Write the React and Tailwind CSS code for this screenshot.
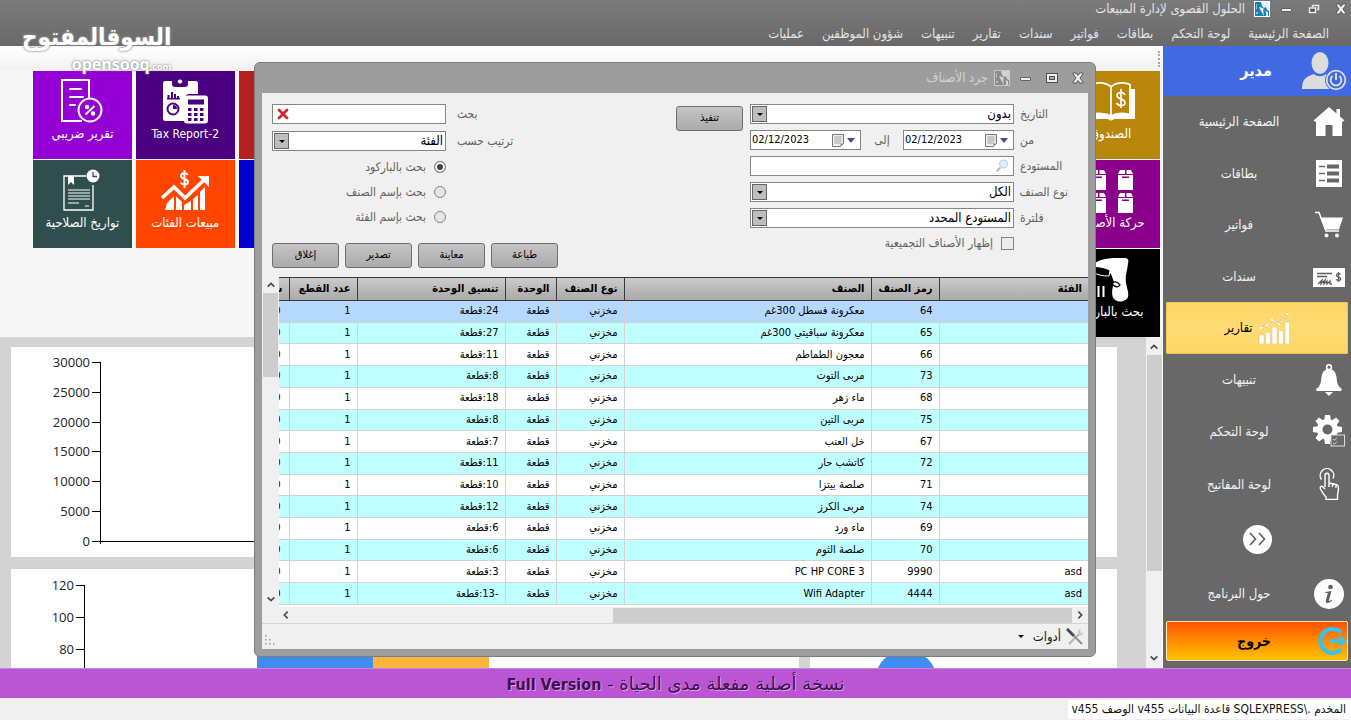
import React, { useState } from 'react';
import clsx from 'clsx';

const menuItems = [
  'الصفحة الرئيسية',
  'لوحة التحكم',
  'بطاقات',
  'فواتير',
  'سندات',
  'تقارير',
  'تنبيهات',
  'شؤون الموظفين',
  'عمليات',
];

const rows = [
  { category: '', code: '64', name: 'معكرونة فسطل 300غم', format: '24:قطعة' },
  { category: '', code: '65', name: 'معكرونة سباقيتي 300غم', format: '27:قطعة' },
  { category: '', code: '66', name: 'معجون الطماطم', format: '11:قطعة' },
  { category: '', code: '73', name: 'مربى التوت', format: '8:قطعة' },
  { category: '', code: '68', name: 'ماء زهر', format: '18:قطعة' },
  { category: '', code: '75', name: 'مربى التين', format: '8:قطعة' },
  { category: '', code: '67', name: 'خل العنب', format: '7:قطعة' },
  { category: '', code: '72', name: 'كاتشب حار', format: '11:قطعة' },
  { category: '', code: '71', name: 'صلصة بيتزا', format: '10:قطعة' },
  { category: '', code: '74', name: 'مربى الكرز', format: '12:قطعة' },
  { category: '', code: '69', name: 'ماء ورد', format: '6:قطعة' },
  { category: '', code: '70', name: 'صلصة الثوم', format: '6:قطعة' },
  { category: 'asd', code: '9990', name: 'PC HP CORE 3', format: '3:قطعة' },
  { category: 'asd', code: '4444', name: 'Wifi Adapter', format: '-13:قطعة' },
];

const columns = [
  { label: 'الفئة', width: 'w-[149px]' },
  { label: 'رمز الصنف', width: 'w-[68px]' },
  { label: 'الصنف', width: '' },
  { label: 'نوع الصنف', width: 'w-[68px]' },
  { label: 'الوحدة', width: 'w-[51px]' },
  { label: 'تنسيق الوحدة', width: 'w-[148px]' },
  { label: 'عدد القطع', width: 'w-[68px]' },
  { label: 'س', width: 'w-[10px]' },
];

/* ---------- icons ---------- */

function AppIcon({ muted }) {
  const ink = muted ? '#8a8a8a' : '#1d7fae';
  return (
    <svg viewBox="0 0 16 16" className="size-4" aria-hidden="true">
      <rect width="16" height="16" fill={muted ? '#c9c9c9' : '#ffffff'} />
      <rect x="1" y="1" width="14" height="14" fill={ink} />
      <path d="M7 1h8v9l-2-1-1-3-2 1-2-2zM5 6l4 1 2 3 3 1v4h-4l-3-5z" fill={muted ? '#d5d5d5' : '#e6f5fb'} />
      <path d="M9 8l3 3v4h-2z" fill={ink} />
      <path d="M2 11h2v2H2zM2 3h1v5H2z" fill={muted ? '#bdbdbd' : '#7cc4e4'} />
    </svg>
  );
}

function CloseIcon() {
  return (
    <svg viewBox="0 0 12 12" className="size-3" aria-hidden="true">
      <path d="M1 1h3.200L6 3.500 7.800 1H11v.8L8 6l3 4.200v.8H7.800L6 8.500 4.200 11H1v-.8L4 6 1 1.800z" fill="#eee" stroke="#4d4d4d" strokeWidth=".9" />
    </svg>
  );
}

function RestoreIcon() {
  return (
    <svg viewBox="0 0 12 12" className="size-3" aria-hidden="true">
      <path d="M4.500 4V2.500h6v4H9" fill="none" stroke="#e8e8e8" strokeWidth="1.500" />
      <rect x="1.500" y="5" width="6" height="4.500" fill="#555" stroke="#e8e8e8" strokeWidth="1.500" />
    </svg>
  );
}

function MaximizeIcon() {
  return (
    <svg viewBox="0 0 12 12" className="size-3" aria-hidden="true">
      <rect x=".5" y="1.500" width="11" height="9" fill="#eee" stroke="#4d4d4d" />
      <rect x="3.500" y="4.500" width="5" height="3" fill="#aaa" stroke="#4d4d4d" />
    </svg>
  );
}

function MinimizeIcon() {
  return (
    <svg viewBox="0 0 12 12" className="size-3" aria-hidden="true">
      <rect x=".5" y="5.500" width="10" height="3" rx=".5" fill="#eee" stroke="#4d4d4d" strokeWidth=".8" />
    </svg>
  );
}

function Chevron({ dir }) {
  const paths = {
    up: 'M2 8l4-4 4 4',
    down: 'M2 4l4 4 4-4',
    left: 'M8 2L4 6l4 4',
    right: 'M4 2l4 4-4 4',
  };
  return (
    <svg viewBox="0 0 12 12" className="size-[10px]" aria-hidden="true">
      <path d={paths[dir]} fill="none" stroke="#4a4a4a" strokeWidth="2" />
    </svg>
  );
}

function UserPowerIcon() {
  return (
    <svg viewBox="0 0 46 40" className="h-10 w-[46px]" fill="#dcdcdc" aria-hidden="true">
      <ellipse cx="19" cy="12" rx="8.500" ry="11" />
      <path d="M1 38c0-9 3-12 12-15 3 3 9 3 12 0 8 2 12 6 12 15z" />
      <circle cx="35" cy="29" r="11" fill="#4169e1" />
      <circle cx="35" cy="29" r="9.300" fill="none" stroke="#dcdcdc" strokeWidth="1.800" />
      <path d="M31.500 25a5.400 5.400 0 1 0 7 0" fill="none" stroke="#dcdcdc" strokeWidth="1.900" />
      <path d="M35 22v7" stroke="#dcdcdc" strokeWidth="2" />
    </svg>
  );
}

function HomeIcon() {
  return (
    <svg viewBox="0 0 32 32" className="size-8" fill="#fff" aria-hidden="true">
      <path d="M16 1L0.500 14.500 3 16v14h9.500V19h7v11H29V16l2.500-1.500L27 10.500V3h-3.500v4.500z" />
    </svg>
  );
}

function CardsIcon() {
  return (
    <svg viewBox="0 0 32 32" className="size-8" aria-hidden="true">
      <rect x="3" y="3" width="26" height="27" fill="#fff" />
      <path d="M6 9.500h6M6 16.500h6M6 23.500h6" stroke="#686868" strokeWidth="1.600" />
      <path d="M14 7.500h12v4H14zM14 14.500h12v4H14zM14 21.500h12v4H14z" fill="#686868" />
    </svg>
  );
}

function CartIcon() {
  return (
    <svg viewBox="0 0 32 32" className="size-8" aria-hidden="true">
      <path d="M2 3.500h4l7 18.500h13" fill="none" stroke="#fff" strokeWidth="1.500" />
      <path d="M7.500 8.500H30l-4 12H12z" fill="#fff" />
      <circle cx="13.500" cy="26.500" r="2" fill="#fff" />
      <circle cx="24" cy="26.500" r="2" fill="#fff" />
    </svg>
  );
}

function CheckIcon() {
  return (
    <svg viewBox="0 0 32 32" className="size-8" aria-hidden="true">
      <rect y="7" width="32" height="19" rx=".5" fill="#fff" />
      <path d="M4 12.500h15M4 15.500h10" stroke="#5d5d5d" strokeWidth="1.300" />
      <path d="M5 23l4-4-1 4 4-4-1 4 3-3v3l3-3v3h2" fill="none" stroke="#5d5d5d" strokeWidth="1.300" />
      <path d="M27.500 13.500c-1-1.400-4-1-4 .8 0 2.400 4.200 1.200 4.200 3.600 0 1.800-3.400 2-4.400.4M25.500 11v10" fill="none" stroke="#5d5d5d" strokeWidth="1.300" />
    </svg>
  );
}

function ReportsIcon() {
  return (
    <svg viewBox="0 0 32 32" className="size-8" aria-hidden="true">
      <path d="M1 23h5v9H1zM7.500 20.500h5V32h-5zM14 15h5v17h-5zM20.500 18.500h5V32h-5zM27 10h4.500v22H27z" fill="#fff" stroke="#e5c36d" strokeWidth=".5" />
      <path d="M3 16l6-3 5-5 7 4 8-10" fill="none" stroke="#b99b55" strokeWidth="2" />
      <path d="M3 16l6-3 5-5 7 4 8-10" fill="none" stroke="#fff" strokeWidth="1.200" />
      <path d="M2 15h2v2H2zM8 12h2v2H8zM13 7h2v2h-2zM20 11h2v2h-2zM28 1h2v2h-2z" fill="#fff" />
    </svg>
  );
}

function BellIcon() {
  return (
    <svg viewBox="0 0 32 32" className="size-8" aria-hidden="true">
      <circle cx="16" cy="3.200" r="2.400" fill="none" stroke="#fff" strokeWidth="1.600" />
      <path d="M16 5c5 0 7 4 7.500 8 .5 6 1 9 5 11.500 1 2-.5 2.500-2 2.500h-21c-1.500 0-3-.5-2-2.500 4-2.500 4.500-5.500 5-11.500C9 9 11 5 16 5zM12 28h8l-4 4z" fill="#fff" />
    </svg>
  );
}

function GearIcon() {
  return (
    <svg viewBox="0 0 32 32" className="size-8" aria-hidden="true">
      <g fill="#fff">
        <circle cx="14.500" cy="14.500" r="10.500" />
        <path d="M12 0h5l1 6h-7zM12 29h5l1-6h-7zM0 12v5l6 1v-7zM29 12v5l-6 1v-7z" />
        <path d="M12 0h5l1 6h-7zM12 29h5l1-6h-7zM0 12v5l6 1v-7zM29 12v5l-6 1v-7z" transform="rotate(45 14.500 14.500)" />
      </g>
      <circle cx="14.500" cy="14.500" r="5" fill="#686868" />
      <rect x="18" y="20" width="13.500" height="11" fill="#686868" stroke="#ddd" />
      <path d="M20 24l1.300 1.300 2.700-2.800M20 28l1.300 1.300 2.700-2.800" fill="none" stroke="#ddd" strokeWidth=".9" />
    </svg>
  );
}

function TouchIcon() {
  return (
    <svg viewBox="0 0 32 32" className="size-8" fill="none" stroke="#fff" strokeWidth="1.400" aria-hidden="true">
      <path d="M8.500 11.500A6.800 6.800 0 1 1 20 10.500" />
      <path d="M12 19V7.500c0-3 4-3 4 0V15l7 1.500c2 .5 2.500 1.500 2.500 3.500 0 4-1 5-1 8v3.500H13V29c-2-2-4-5-5.500-8-1-2.500 1-3.500 2.500-2L12 21M16 15v4M19.500 15.500V19M23 16.500V20" />
    </svg>
  );
}

function InfoIcon() {
  return (
    <svg viewBox="0 0 32 32" className="size-8" aria-hidden="true">
      <circle cx="16" cy="16" r="15" fill="#fff" />
      <circle cx="17.500" cy="9" r="2.300" fill="#5f5f5f" />
      <path d="M12.500 14l6-1-2.600 9.500c-.2 1 .6 1 2.600-1l.6.7c-2.500 3.300-7 3.800-6.300.5l2-7.700h-2.400z" fill="#5f5f5f" />
    </svg>
  );
}

function ExitIcon() {
  return (
    <svg viewBox="0 0 30 30" className="size-[30px]" fill="none" stroke="#35c4ec" aria-hidden="true">
      <path d="M24 6.500A12 12 0 1 0 24 23.500" strokeWidth="4.200" />
      <path d="M13 15h12" strokeWidth="4" />
      <path d="M22 8.500l8 6.500-8 6.500z" fill="#35c4ec" stroke="none" />
    </svg>
  );
}

function TaxDocIcon() {
  return (
    <svg viewBox="0 0 44 46" className="h-[46px] w-11" fill="none" stroke="#fff" strokeWidth="2" aria-hidden="true">
      <path d="M22 43H2V2h27v18" />
      <path d="M10 11h11M10 19h13M10 27h5" strokeLinecap="round" />
      <circle cx="30" cy="32" r="11.500" />
      <path d="M34.500 28l-9 8.500" />
      <circle cx="27" cy="29" r="1.200" />
      <circle cx="33" cy="35.500" r="1.200" />
    </svg>
  );
}

function TaxCalcIcon() {
  return (
    <svg viewBox="0 0 46 46" className="size-[46px]" fill="#fff" aria-hidden="true">
      <path d="M3 3h31c1 0 2 1 2 2v11h-8c-4 0-5 2-5 5v22H3c-1 0-2-1-2-2V5c0-1 1-2 2-2z" />
      <path d="M10 3h16v3c0 2-1 3-3 3H13c-2 0-3-1-3-3z" fill="#4b0082" />
      <circle cx="18" cy="3.500" r="2.600" stroke="#4b0082" />
      <path d="M5 20h13v1.500H5zM5.500 17h2v3h-2zM9 14h2v6H9zM12 16h2v4h-2zM15 18h2v2h-2z" fill="#4b0082" />
      <circle cx="11" cy="31" r="5.500" fill="none" stroke="#4b0082" strokeWidth="2" />
      <path d="M11 27v4h4a4 4 0 0 0-4-4z" fill="#4b0082" />
      <rect x="22" y="17.500" width="24" height="28" rx="3" />
      <rect x="26" y="21.500" width="16" height="5" fill="#4b0082" />
      <path d="M26 30h3.500v3H26zM32 30h3.500v3H32zM38 30h3.500v3H38zM26 35h3.500v3H26zM32 35h3.500v3H32zM38 35h3.500v3H38zM26 40h3.500v3H26zM32 40h3.500v3H32zM38 40h3.500v3H38z" fill="#4b0082" />
    </svg>
  );
}

function ExpiryIcon() {
  return (
    <svg viewBox="0 0 44 46" className="h-[46px] w-11" fill="none" stroke="#fff" aria-hidden="true">
      <path d="M26 9H4v34h29V18" strokeWidth="1.300" />
      <path d="M8 23h22M8 26h22M8 29h22M8 32h22M8 36h11M25 39h4" strokeWidth="1.200" />
      <path d="M8 9h6v9l-3-3-3 3z" fill="#fff" stroke="none" />
      <circle cx="33" cy="9" r="6.500" fill="#fff" stroke="none" />
      <path d="M33 5v4.500h4" stroke="#2f4f4f" strokeWidth="1.300" />
    </svg>
  );
}

function SalesIcon() {
  return (
    <svg viewBox="0 0 50 46" className="h-[46px] w-[50px]" aria-hidden="true">
      <path d="M7 36l7-7v14H5zM16 29l6 6v8h-6zM24 38l7-4v9h-7zM33 32l5-4v15h-5zM40 25l5-5v23h-5z" fill="#fff" />
      <path d="M2 31l12-11 11 11 19-18" fill="none" stroke="#fff" strokeWidth="3.600" />
      <path d="M38 9h11v11z" fill="#fff" />
      <path d="M28 8c-2-3-7-2-7 1 0 4 7 2 7 6 0 3-5.500 3.500-7.500.5M24.500 3v18" fill="none" stroke="#fff" strokeWidth="2" />
    </svg>
  );
}

function LedgerIcon() {
  return (
    <svg viewBox="0 0 50 46" className="h-[46px] w-[50px]" aria-hidden="true">
      <path d="M3 11H0v30h22c2 2 4 2 6 0h21V11h-4v25H3z" fill="#fff" />
      <path d="M25 9C20 4 10 4 5 6.500v30c6-1.500 15-1.500 20 1.500 5-3 13-3 19-1.500v-30C39 4 30 4 25 9zm0 0v30" fill="#b8860b" stroke="#fff" strokeWidth="1.800" />
      <path d="M39 17c-2-4-8-3-8 .5 0 4.500 8 2.500 8 7 0 4-6.500 4-8.500.5M35 11v19" fill="none" stroke="#fff" strokeWidth="1.600" />
    </svg>
  );
}

function BoxesIcon() {
  const spots = [[5, 3], [32, 3], [5, 26], [32, 26]];
  return (
    <svg viewBox="0 0 50 46" className="h-[46px] w-[50px]" fill="#fff" aria-hidden="true">
      {spots.map(([x, y]) => (
        <g key={`${x}-${y}`} transform={`translate(${x} ${y})`}>
          <path d="M2 0h5v4H0zM8.500 0H13l2 4H8.500zM0 5h15v15H0z" />
          <path d="M4 6.500h7V8H4z" fill="#8b008b" />
        </g>
      ))}
    </svg>
  );
}

function ScannerIcon() {
  return (
    <svg viewBox="0 0 50 46" className="h-[46px] w-[50px]" aria-hidden="true">
      <path d="M4 10C12 4 20 2 30 2h10c2 1 3 2 2 5-1 10-3 12-2 20 1 6 3 9 2 14-2 5-11 6-14 2-3-3-2-10 0-17-2-5-2-7-4-9-6 0-15-2-20-4z" fill="#fff" />
      <path d="M6 11c5-1 11 0 18 3l-1 6c-6 0-12-1-16-4z" fill="#000" stroke="#fff" />
      <path d="M26 28c2-3 5-3 8 1-2 3-5 2-8-1z" fill="#fff" stroke="#000" strokeWidth="1.300" />
      <path d="M7 30v11M12.500 30v11M17.500 30v11" stroke="#fff" strokeWidth="2" />
    </svg>
  );
}

function CalendarIcon() {
  return (
    <svg viewBox="0 0 12 13" className="h-[13px] w-3" aria-hidden="true">
      <path d="M.5.500h11v9l-3 3h-8z" fill="#f0eeee" stroke="#777" />
      <path d="M2 3h8M2 5h8M2 7h8M2 9h6M4 2v8M6 2v8M8 2v8" stroke="#b5b0b5" strokeWidth=".8" />
      <path d="M8.500 12.500v-3h3z" fill="#888" />
    </svg>
  );
}

function SearchGlass() {
  return (
    <svg viewBox="0 0 14 14" className="size-[14px]" aria-hidden="true">
      <path d="M5.500 8.500L1.500 12.500" stroke="#b5b9c6" strokeWidth="2" />
      <circle cx="8.500" cy="5" r="4" fill="#e2effb" stroke="#b4cbe4" />
    </svg>
  );
}

function ToolsIcon() {
  return (
    <svg viewBox="0 0 18 18" className="size-[18px]" fill="none" aria-hidden="true">
      <path d="M3 16L13 6" stroke="#b5b5b5" strokeWidth="2.200" />
      <path d="M12 6c-1-3 1-5 3-5l-1 3 1 1 2-1c0 3-2 4-4 3.500" fill="#c9c9c9" />
      <path d="M1 1l7 7" stroke="#4a4a4a" strokeWidth="3" />
      <path d="M8 8l8 8" stroke="#8f8f8f" strokeWidth="2" />
    </svg>
  );
}

/* ---------- shared bits ---------- */

function ScrollButton({ dir, label }) {
  return (
    <button type="button" aria-label={label} className="flex size-4 shrink-0 items-center justify-center">
      <Chevron dir={dir} />
    </button>
  );
}

function SelectBox({ id, value }) {
  return (
    <div className="relative">
      <select
        id={id}
        defaultValue={value}
        className="block h-5 w-full appearance-none border border-[#858585] bg-white pr-[2px] pl-5 text-[13px] leading-[18px] text-black outline-none"
      >
        <option>{value}</option>
      </select>
      <span className="pointer-events-none absolute top-[2px] left-[2px] flex h-4 w-[15px] items-center justify-center border border-[#666] bg-[#bdbdbd]">
        <span className="border-x-[3px] border-t-[3px] border-x-transparent border-t-black" />
      </span>
    </div>
  );
}

function DateBox({ id }) {
  return (
    <div dir="ltr" className="flex h-5 w-[111px] items-center gap-[3px] border border-[#858585] bg-white pr-[5px]">
      <input
        id={id}
        defaultValue="02/12/2023"
        className="w-0 min-w-0 flex-1 bg-transparent pl-px text-[11px] text-black outline-none"
      />
      <CalendarIcon />
      <span className="border-x-4 border-t-[5px] border-x-transparent border-t-[#44527a]" />
    </div>
  );
}

function GrayButton({ children }) {
  return (
    <button
      type="button"
      className="h-[25px] w-[67px] shrink-0 rounded-[3px] border border-[#6f6f6f] bg-linear-to-b from-[#c4c4c4] to-[#ababab] text-[11px] text-black"
    >
      {children}
    </button>
  );
}

function FieldRow({ label, htmlFor, children }) {
  return (
    <div className="flex h-5 items-center gap-[6px]">
      <label htmlFor={htmlFor} className="w-[48px] text-left text-xs whitespace-nowrap text-[#636363]">
        {label}
      </label>
      <div className="w-[264px]">{children}</div>
    </div>
  );
}

/* ---------- sections ---------- */

function Header() {
  return (
    <header className="bg-linear-to-b from-[#7b7b7b] to-[#696969] text-[#e2e2e2]">
      <div className="flex h-[18px] items-center gap-[15px] pr-1">
        <button type="button" aria-label="إغلاق البرنامج"><CloseIcon /></button>
        <button type="button" aria-label="استعادة"><RestoreIcon /></button>
        <button type="button" aria-label="تصغير"><MinimizeIcon /></button>
        <div className="-mr-1 flex items-center gap-[9px]">
          <AppIcon />
          <h1 className="text-[13px] leading-[18px] whitespace-nowrap">الحلول القصوى لإدارة المبيعات</h1>
        </div>
      </div>
      <nav className="flex h-7 items-center gap-[18px] pt-1 pr-[22px]">
        {menuItems.map((item) => (
          <a key={item} href="#" className="text-[13px] whitespace-nowrap">
            {item}
          </a>
        ))}
      </nav>
    </header>
  );
}

function SideItem({ label, icon, tall }) {
  return (
    <a href="#" className={clsx('flex items-center pr-[6px] text-[13px] text-[#f2f2f2]', tall ? 'flex-[18]' : 'flex-[17]')}>
      {icon}
      <span className="flex-1 pl-[2px] text-center">{label}</span>
    </a>
  );
}

function Sidebar() {
  return (
    <aside className="flex w-[188px] shrink-0 flex-col bg-[#686868]">
      <div className="flex h-[50px] items-center bg-[#4169e1] pr-1">
        <UserPowerIcon />
        <span className="flex-1 pl-12 text-center text-base font-bold text-white">مدير</span>
      </div>
      <nav className="flex flex-1 flex-col">
        <SideItem label="الصفحة الرئيسية" icon={<HomeIcon />} />
        <SideItem label="بطاقات" icon={<CardsIcon />} />
        <SideItem label="فواتير" icon={<CartIcon />} />
        <SideItem label="سندات" icon={<CheckIcon />} />
        <a
          href="#"
          className="mx-[3px] flex flex-[17] items-center justify-center gap-[5px] rounded-xs bg-linear-to-b from-[#fed566] via-[#ffdc74] to-[#fed566] text-[13px] text-black inset-ring inset-ring-[#f0c658]"
        >
          <ReportsIcon />
          <span>تقارير</span>
        </a>
        <SideItem label="تنبيهات" icon={<BellIcon />} />
        <SideItem label="لوحة التحكم" icon={<GearIcon />} />
        <SideItem label="لوحة المفاتيح" icon={<TouchIcon />} tall />
        <div className="flex flex-[18] items-center justify-center">
          <button type="button" aria-label="المزيد" className="flex size-[29px] items-center justify-center rounded-full bg-white">
            <svg viewBox="0 0 20 20" className="size-5" fill="none" stroke="#5c5c5c" strokeWidth="1.600">
              <path d="M3 4l5.500 6L3 16M12 4l5.500 6-5.500 6" />
            </svg>
          </button>
        </div>
        <SideItem label="حول البرنامج" icon={<InfoIcon />} tall />
      </nav>
      <button
        type="button"
        className="mx-[3px] mb-[7px] flex h-10 items-center rounded-xs border border-[#ffe9a8] bg-linear-to-b from-[#ff4d00] to-[#ffc000] text-sm font-bold text-black"
      >
        <ExitIcon />
        <span className="flex-1 pl-6 text-center">خروج</span>
      </button>
    </aside>
  );
}

function Tile({ label, icon, className, latin }) {
  return (
    <a href="#" className={clsx('flex h-[88px] flex-col items-center overflow-hidden pt-[7px] whitespace-nowrap text-white', className)}>
      {icon}
      {label ? <span className={latin ? 'text-xs leading-5' : 'text-[13px] leading-5'}>{label}</span> : null}
    </a>
  );
}

function Tiles() {
  return (
    <div className="bg-[#f7f7f7]">
      <div className="mr-[3px] ml-[33px] grid grid-cols-11 gap-x-1 gap-y-px">
        <Tile className="col-start-1 row-start-1 bg-[#b8860b]" label="الصندوق" icon={<LedgerIcon />} />
        <Tile className="col-start-1 row-start-2 bg-[#8b008b]" label="حركة الأصناف" icon={<BoxesIcon />} />
        <Tile className="col-start-1 row-start-3 bg-black" label="بحث بالباركود" icon={<ScannerIcon />} />
        <Tile className="col-start-9 row-start-1 bg-[#b22222]" />
        <Tile className="col-start-9 row-start-2 bg-[#0000cd]" />
        <Tile className="col-start-10 row-start-1 bg-[#4b0082]" label="Tax Report-2" latin icon={<TaxCalcIcon />} />
        <Tile className="col-start-10 row-start-2 bg-[#ff4500]" label="مبيعات الفئات" icon={<SalesIcon />} />
        <Tile className="col-start-11 row-start-1 bg-[#9400d3]" label="تقرير ضريبي" icon={<TaxDocIcon />} />
        <Tile className="col-start-11 row-start-2 bg-[#2f4f4f]" label="تواريخ الصلاحية" icon={<ExpiryIcon />} />
      </div>
    </div>
  );
}

function SalesChart() {
  const ticks = [30000, 25000, 20000, 15000, 10000, 5000, 0];
  return (
    <svg className="block h-[210px] w-full" direction="ltr">
      {ticks.map((tick, i) => {
        const y = Math.round(15 + i * 29.8);
        return (
          <g key={tick}>
            <text x="79" y={y + 5} textAnchor="end" className="font-[family-name:'Open_Sans',sans-serif] text-[13px]" fill="#222">
              {tick}
            </text>
            <path d={`M81 ${y + 0.5}h8`} stroke="#000" />
          </g>
        );
      })}
      <path d="M89.500 15v182" stroke="#000" />
      <path d="M89 194.500h650" stroke="#000" />
    </svg>
  );
}

function CountChart() {
  const ticks = [120, 100, 80];
  return (
    <svg className="block h-[210px] w-full" direction="ltr">
      {ticks.map((tick, i) => {
        const y = 16 + i * 32;
        return (
          <g key={tick}>
            <text x="63" y={y + 5} textAnchor="end" className="font-[family-name:'Open_Sans',sans-serif] text-[13px]" fill="#222">
              {tick}
            </text>
            <path d={`M65 ${y + 0.5}h8`} stroke="#000" />
          </g>
        );
      })}
      <path d="M73.500 16v190" stroke="#000" />
      <rect x="246" y="40" width="116" height="165" fill="#418cf0" />
      <rect x="362" y="60" width="116" height="145" fill="#fcb441" />
    </svg>
  );
}

function Charts() {
  return (
    <div className="flex min-h-0 flex-1 bg-[#d3d3d3]">
      <div className="flex w-[17px] shrink-0 flex-col items-center border-r border-white bg-[#f0f0f0] py-[2px]">
        <ScrollButton dir="up" label="تمرير لأعلى" />
        <div className="h-[216px] w-[15px] bg-[#cdcdcd]" />
        <div className="mt-auto">
          <ScrollButton dir="down" label="تمرير لأسفل" />
        </div>
      </div>
      <div className="h-0 min-h-full flex-1 overflow-hidden pt-[10px] pr-[29px] pl-[11px]">
        <div className="grid grid-cols-[307px_1fr] gap-x-[11px] gap-y-3">
          <div className="bg-white" />
          <div className="bg-white">
            <SalesChart />
          </div>
          <div className="bg-white">
            <svg className="block h-[210px] w-full">
              <circle cx="96" cy="112" r="31" fill="#418cf0" />
            </svg>
          </div>
          <div className="bg-white">
            <CountChart />
          </div>
        </div>
      </div>
    </div>
  );
}

function FilterForm() {
  const [mode, setMode] = useState('barcode');
  const modes = [
    { id: 'barcode', label: 'بحث بالباركود' },
    { id: 'item', label: 'بحث بإسم الصنف' },
    { id: 'category', label: 'بحث بإسم الفئة' },
  ];

  return (
    <form className="flex items-start pt-[11px] pr-5 pb-[9px] pl-[10px]">
      <div className="flex flex-col gap-[6px]">
        <FieldRow label="التاريخ" htmlFor="period">
          <SelectBox id="period" value="بدون" />
        </FieldRow>
        <FieldRow label="من" htmlFor="from">
          <div className="flex items-center justify-between">
            <DateBox id="from" />
            <label htmlFor="to" className="text-xs text-[#636363]">إلى</label>
            <DateBox id="to" />
          </div>
        </FieldRow>
        <FieldRow label="المستودع" htmlFor="store">
          <div className="flex h-5 items-center border border-[#858585] bg-white pr-1">
            <SearchGlass />
            <input id="store" className="min-w-0 flex-1 bg-transparent text-xs outline-none" />
          </div>
        </FieldRow>
        <FieldRow label="نوع الصنف" htmlFor="kind">
          <SelectBox id="kind" value="الكل" />
        </FieldRow>
        <FieldRow label="فلترة" htmlFor="filter">
          <SelectBox id="filter" value="المستودع المحدد" />
        </FieldRow>
        <label className="mr-[54px] flex h-[18px] items-center gap-2 text-xs text-[#636363]">
          <input type="checkbox" className="size-[13px] appearance-none border border-[#858585] bg-[#ececec]" />
          إظهار الأصناف التجميعية
        </label>
      </div>

      <div className="mr-[7px]">
        <GrayButton>تنفيذ</GrayButton>
      </div>

      <div className="mr-auto flex flex-col items-end">
        <div className="flex h-5 items-center gap-[11px]">
          <label htmlFor="search" className="w-[57px] text-left text-xs whitespace-nowrap text-[#636363]">بحث</label>
          <div className="flex h-5 w-[174px] items-center border border-[#858585] bg-white pl-1">
            <input id="search" className="min-w-0 flex-1 bg-transparent text-xs outline-none" />
            <button type="button" aria-label="مسح">
              <svg viewBox="0 0 12 12" className="size-3">
                <path d="M2 2l8 8M10 2l-8 8" stroke="#cc2a2a" strokeWidth="2.800" strokeLinecap="round" />
              </svg>
            </button>
          </div>
        </div>
        <div className="mt-[7px] flex h-5 items-center gap-[11px]">
          <label htmlFor="sort" className="w-[57px] text-left text-xs whitespace-nowrap text-[#636363]">ترتيب حسب</label>
          <div className="w-[174px]">
            <SelectBox id="sort" value="الفئة" />
          </div>
        </div>
        <div className="mt-[3px] flex w-[174px] flex-col">
          {modes.map((m) => (
            <label key={m.id} className="flex h-[25px] items-center gap-2 text-xs whitespace-nowrap text-[#636363]">
              <input
                type="radio"
                name="mode"
                checked={mode === m.id}
                onChange={() => setMode(m.id)}
                className="size-3 shrink-0 appearance-none rounded-full border border-[#858585] bg-[#e6e6e6] checked:bg-[#404040] checked:shadow-[inset_0_0_0_2px_#fafafa]"
              />
              {m.label}
            </label>
          ))}
        </div>
        <div className="mt-[14px] flex gap-[6px]">
          <GrayButton>طباعة</GrayButton>
          <GrayButton>معاينة</GrayButton>
          <GrayButton>تصدير</GrayButton>
          <GrayButton>إغلاق</GrayButton>
        </div>
      </div>
    </form>
  );
}

function ItemsTable() {
  return (
    <div className="flex bg-[#f0f0f0]">
      <div className="min-w-0 flex-1 overflow-hidden bg-white pb-[2px]">
        <table className="h-[328px] w-full table-fixed border-collapse text-[11px] text-black">
          <thead>
            <tr className="h-[23px] bg-linear-to-b from-[#cbcbcb] to-[#a8a8a8]">
              {columns.map((c) => (
                <th
                  key={c.label}
                  className={clsx(
                    'overflow-hidden border-y border-l border-[#3a3a3a] py-0 pr-[6px] pl-0 text-right font-bold whitespace-nowrap last:border-l-0',
                    c.width,
                  )}
                >
                  {c.label}
                </th>
              ))}
            </tr>
          </thead>
          <tbody>
            {rows.map((row, i) => (
              <tr key={row.code} className={i === 0 ? 'bg-[#b5d9fd]' : i % 2 ? 'bg-[#c0ffff]' : 'bg-white'}>
                {[row.category, row.code, row.name, 'مخزني', 'قطعة', row.format, '1', '0'].map((cell, j) => (
                  <td
                    key={columns[j].label}
                    className="overflow-hidden border-b border-l border-[#d3d3d3] py-0 pr-[6px] pl-0 text-right leading-4 whitespace-nowrap last:border-l-0 last:pr-2"
                  >
                    {cell}
                  </td>
                ))}
              </tr>
            ))}
          </tbody>
        </table>
      </div>
      <div className="flex w-[17px] shrink-0 flex-col items-center">
        <ScrollButton dir="up" label="صف سابق" />
        <div className="h-[84px] w-[15px] bg-[#cdcdcd]" />
        <div className="mt-auto">
          <ScrollButton dir="down" label="صف تال" />
        </div>
      </div>
    </div>
  );
}

function InventoryWindow() {
  return (
    <section className="absolute top-[62px] right-[255px] left-[254px] rounded-md border border-[#7d7d7d] bg-[#9d9d9d] px-[7px] pb-[7px]">
      <div className="flex h-[30px] items-center gap-[14px] pr-1">
        <button type="button" aria-label="إغلاق النافذة"><CloseIcon /></button>
        <button type="button" aria-label="تكبير"><MaximizeIcon /></button>
        <button type="button" aria-label="تصغير النافذة"><MinimizeIcon /></button>
        <div className="-mr-1 flex items-center gap-[6px]">
          <AppIcon muted />
          <h2 className="text-[13px] text-[#d3d3d3]">جرد الأصناف</h2>
        </div>
      </div>
      <div className="bg-[#f0f0f0]">
        <FilterForm />
        <ItemsTable />
        <div className="ml-4 flex h-4 items-center">
          <ScrollButton dir="right" label="تمرير لليمين" />
          <div className="h-[15px] w-[459px] bg-[#cdcdcd]" />
          <div className="mr-auto">
            <ScrollButton dir="left" label="تمرير لليسار" />
          </div>
        </div>
        <div className="flex h-[26px] items-center justify-between border-t border-[#d5d5d5] pr-1 pl-[3px]">
          <button type="button" className="flex items-center gap-[5px] text-[13px] text-[#222]">
            <ToolsIcon />
            أدوات
            <span className="mr-1 border-x-[3px] border-t-[3px] border-x-transparent border-t-black" />
          </button>
          <svg viewBox="0 0 10 10" className="mt-[6px] size-[10px]" fill="#999" aria-hidden="true">
            <path d="M0 0h1.500v1.500H0zM0 4h1.500v1.500H0zM4 4h1.500v1.500H4zM0 8h1.500v1.500H0zM4 8h1.500v1.500H4zM8 8h1.500v1.500H8z" />
          </svg>
        </div>
      </div>
    </section>
  );
}

export default function App() {
  return (
    <div
      dir="rtl"
      className="relative flex min-h-screen flex-col overflow-hidden bg-[#f0f0f0] font-[family-name:'DejaVu_Sans_Condensed','DejaVu_Sans',sans-serif]"
    >
      <Header />
      <main className="flex flex-1">
        <Sidebar />
        <div className="flex min-w-0 flex-1 flex-col">
          <div className="flex h-[25px] items-center bg-linear-to-b from-white to-[#f1f1f1] pr-[3px]">
            <span className="h-4 border-r-2 border-dotted border-[#aaa]" />
          </div>
          <Tiles />
          <Charts />
        </div>
      </main>
      <div className="flex h-[30px] items-center justify-center border-t border-[#cc83df] bg-[#ba55d3] text-[#3f1050] [text-shadow:1px_1px_0_#d9a0e8]">
        <p className="font-[family-name:'DejaVu_Sans',sans-serif] text-lg leading-7">
          نسخة أصلية مفعلة مدى الحياة -{' '}
          <b className="font-[family-name:'DejaVu_Sans_Condensed',sans-serif] text-base">Full Version</b>
        </p>
      </div>
      <footer className="flex h-[22px] items-start pt-[2px]">
        <p className="bg-white pr-[5px] pl-[3px] text-xs leading-[19px] text-[#111]">
          المخدم .\SQLEXPRESS قاعدة البيانات v455 الوصف v455
        </p>
      </footer>

      <InventoryWindow />

      <div className="pointer-events-none absolute top-[17px] left-[22px] flex flex-col items-start text-white [text-shadow:0_0_2px_#999,0_0_3px_#999]">
        <span className="text-2xl leading-10 font-bold whitespace-nowrap">السوقالمفتوح</span>
        <span dir="ltr" className="font-[family-name:'Open_Sans',sans-serif] text-base leading-[14px] font-bold">
          opensooq<span className="text-[9px]">.com</span>
        </span>
      </div>
    </div>
  );
}
